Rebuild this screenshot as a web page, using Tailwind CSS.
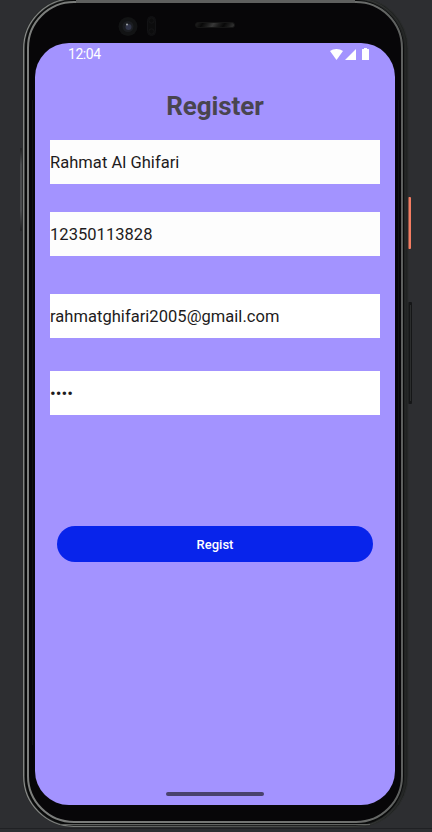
<!DOCTYPE html>
<html lang="en">
<head>
<meta charset="utf-8">
<title>Register</title>
<script src="https://cdn.jsdelivr.net/npm/@tailwindcss/browser@4"></script>
</head>
<body class="bg-[#2d2e31] overflow-hidden">
<div class="relative w-[432px] h-[832px] overflow-hidden pl-[35px] pt-[43px] font-['Roboto',sans-serif]">
  <!-- Phone body -->
  <svg class="absolute inset-0" width="432" height="832" viewBox="0 0 432 832" fill="none">
    <defs>
      <linearGradient id="rim" x1="23" y1="0" x2="408" y2="0" gradientUnits="userSpaceOnUse">
        <stop offset="0" stop-color="#8b8d8b"/><stop offset=".25" stop-color="#666866"/><stop offset=".85" stop-color="#3c3e3c"/><stop offset="1" stop-color="#242625"/>
      </linearGradient>
      <linearGradient id="inner" x1="23" y1="0" x2="408" y2="0" gradientUnits="userSpaceOnUse">
        <stop offset="0" stop-color="#7d7f7d"/><stop offset=".85" stop-color="#6e706e"/><stop offset="1" stop-color="#5c5e5d"/>
      </linearGradient>
      <linearGradient id="key" x1="0" y1="148" x2="0" y2="231" gradientUnits="userSpaceOnUse">
        <stop offset="0" stop-color="#202122"/><stop offset=".2" stop-color="#4a4c4e"/><stop offset=".75" stop-color="#4a4c4e"/><stop offset="1" stop-color="#202122"/>
      </linearGradient>
      <linearGradient id="speaker" x1="195" y1="0" x2="203" y2="5" gradientUnits="userSpaceOnUse" spreadMethod="reflect">
        <stop offset="0" stop-color="#080808"/><stop offset=".5" stop-color="#1c1c1c"/><stop offset="1" stop-color="#383838"/>
      </linearGradient>
    </defs>
    <path d="M0 828.5H432" stroke="#202124"/>
    <rect x="20" y="148" width="2" height="83" rx="1" fill="url(#key)"/>
    <rect x="408" y="197" width="3" height="52" rx="1" fill="#f47d62"/>
    <rect x="408" y="302" width="4" height="102" rx="1" fill="#151617"/>
    <path d="M410.5 305V401" stroke="#2b2d2d"/>
    <rect x="22.5" y="-2.500" width="385.500" height="829.5" rx="51" fill="#202222" stroke="#2b2d2d"/>
    <rect x="23.7" y="-1.3" width="382" height="827.6" rx="50" stroke="url(#rim)" stroke-width="1.2"/>
    <rect x="25.5" y=".5" width="378" height="824.3" rx="48" fill="#090a0a" stroke="#0a0b0b"/>
    <rect x="28" y="2" width="374" height="820" rx="46" fill="#070608" stroke="url(#inner)" stroke-width="2"/>
    <path d="M60 824.500H370" stroke="#606260"/>
    <path d="M76 1.5H355" stroke="#5e5f5e" stroke-width="3"/>
    <path d="M32.5 100V745M398.5 100V745" stroke="#101212"/>
    <circle cx="128" cy="26.5" r="9.5" fill="#121314"/>
    <circle cx="128" cy="26.5" r="5.5" fill="#1b1d21"/>
    <circle cx="128.5" cy="27" r="3" fill="#303448"/>
    <circle cx="127" cy="24.5" r="1" fill="#a0a5aa"/>
    <rect x="147.5" y="16.5" width="8" height="19" rx="4" fill="#0c0c0d" stroke="#121214"/>
    <circle cx="151.5" cy="20.5" r="2.7" stroke="#141416"/><circle cx="151.5" cy="31.5" r="2.7" stroke="#141416"/>
    <rect x="195.5" y="22.5" width="39" height="5" rx="2.5" fill="url(#speaker)" stroke="#151515"/>
  </svg>

  <main class="relative w-[360px] h-[762px] rounded-[34px] bg-[#a393ff] flex flex-col overflow-hidden">
    <header class="h-[23px] pl-[33px] pr-[25px] flex items-center justify-between text-white">
      <span class="text-[14px] tracking-[-0.45px] leading-[23px]">12:04</span>
      <svg width="40" height="13" viewBox="0 0 40 13" fill="currentColor">
        <path d="M0 3C3.5 .3 9.500 .3 13 3L6.500 12Z"/>
        <path d="M26 1V12H15Z"/>
        <path d="M34 1V0H37V1H38.500Q39 1 39 1.500V12H32V1.500Q32 1 32.500 1Z"/>
      </svg>
    </header>
    <h1 class="mt-[24px] h-[32px] text-center text-[26px] leading-[32px] tracking-[-0.1px] font-bold text-[#49454f]">Register</h1>
    <form class="flex flex-col px-[15px] text-[16.5px] text-[#1d1b20]">
      <div class="mt-[18px] h-[44px] bg-[#fdfdfd] leading-[46px] tracking-[0.04px]"><span>Rahmat Al Ghifari</span></div>
      <div class="mt-[28px] h-[44px] bg-[#fdfdfd] leading-[46px] tracking-[0.04px]"><span>12350113828</span></div>
      <div class="mt-[38px] h-[44px] bg-white leading-[46px] tracking-[0.04px]"><span>rahmatghifari2005@gmail.com</span></div>
      <div class="mt-[33px] h-[44px] bg-white leading-[44px]"><span class="text-[17px]">••••</span></div>
      <button type="button" class="mt-[111px] mx-[7px] h-[36px] rounded-full bg-[#0824eb] text-white text-[13px] leading-[38px] font-medium">Regist</button>
    </form>
    <div class="mt-auto mb-[9px] mx-auto w-[98px] h-[4px] rounded-full bg-[#49426c]"></div>
  </main>
</div>
</body>
</html>
